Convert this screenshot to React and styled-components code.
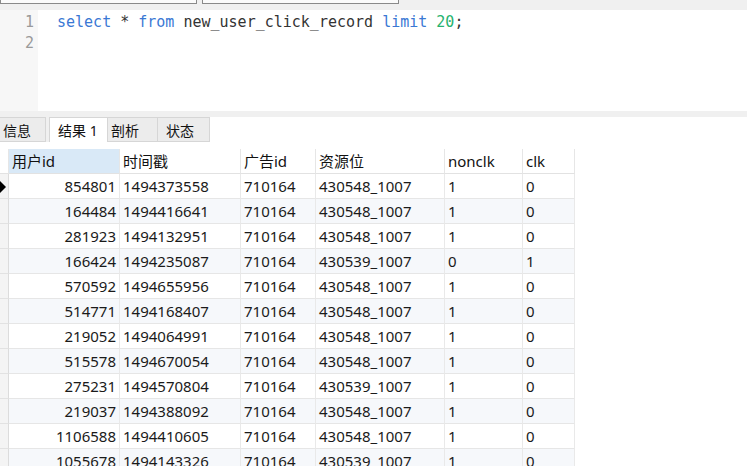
import { Fragment } from "react";
import styled, { createGlobalStyle } from "styled-components";

const GlobalStyle = createGlobalStyle`
  body {
    margin: 0;
    background: #fff;
    overflow: hidden;
  }
`;

const Page = styled.div`
  width: 747px;
  height: 466px;
  overflow: hidden;
  background: #fff;
  font-family: "Noto Sans", "Noto Sans CJK SC", sans-serif;
`;

const TopStrip = styled.div`
  height: 10px;
  background: #f0f0f0;
  display: flex;
  gap: 5px;
  align-items: flex-start;
`;

const InputStub = styled.div`
  width: 195px;
  height: 3px;
  background: #fbfbfb;
  border: 1px solid #8a8a8a;
  border-top: none;
`;

const Editor = styled.div`
  height: 101px;
  display: flex;
  background: #fff;
`;

const Gutter = styled.div`
  width: 38px;
  background: #f7f7f7;
  padding-top: 2px;
  box-sizing: border-box;
`;

const LineNo = styled.div`
  height: 21px;
  line-height: 21px;
  text-align: right;
  padding-right: 4px;
  font-family: "DejaVu Sans Mono", monospace;
  font-size: 15px;
  color: #9a9a9a;
`;

const Code = styled.div`
  padding: 2px 0 0 19px;
  font-family: "DejaVu Sans Mono", monospace;
  font-size: 15px;
  line-height: 21px;
  color: #333;
  white-space: pre;
`;

const Kw = styled.span`
  color: ${(p) => (p.$num ? "#27b36f" : "#3a78d4")};
`;

const Separator = styled.div`
  height: 6px;
  background: #f0f0f0;
`;

const TabBar = styled.div`
  height: 25px;
  display: flex;
  background: #fff;
`;

const Tab = styled.div`
  box-sizing: border-box;
  width: ${(p) => p.$w}px;
  height: 25px;
  padding-left: ${(p) => p.$pl ?? 8}px;
  line-height: 25px;
  font-size: 14px;
  color: #111;
  background: ${(p) => (p.$active ? "#fff" : "#ececec")};
  border: 1px solid #d6d6d6;
  border-bottom: ${(p) => (p.$active ? "none" : "1px solid #d6d6d6")};
  border-left: ${(p) => (p.$noLeft ? "none" : "1px solid #d6d6d6")};
`;

const TabGap = styled.div`
  width: ${(p) => p.$w}px;
  background: #f0f0f0;
`;

const Grid = styled.div`
  margin-top: 7px;
  display: grid;
  grid-template-columns: 9px 111px 121px 75px 129px 78px 52px;
  grid-auto-rows: 25px;
  width: 575px;
`;

const HeadCell = styled.div`
  box-sizing: border-box;
  padding-left: 3px;
  line-height: 24px;
  font-size: 15px;
  color: #111;
  background: ${(p) => (p.$sel ? "#d9e9f7" : "#fff")};
  border-right: 1px solid #e6e6e6;
  border-bottom: 1px solid #e2e2e2;
  white-space: nowrap;
`;

const Cell = styled.div`
  box-sizing: border-box;
  padding: 0 3px;
  line-height: 24px;
  font-size: 15px;
  color: #1a1a1a;
  text-align: ${(p) => (p.$right ? "right" : "left")};
  background: ${(p) => (p.$alt ? "#f6f8fb" : "#fff")};
  border-right: 1px solid #e9e9e9;
  border-bottom: 1px solid #e6e6e6;
  white-space: nowrap;
`;

const Marker = styled.div`
  position: relative;
  box-sizing: border-box;
  background: #f4f4f4;
  border-right: 1px solid #dcdcdc;
  border-bottom: 1px solid #e2e2e2;
`;

const Arrow = styled.div`
  position: absolute;
  left: 0;
  top: 7px;
  width: 0;
  height: 0;
  border-top: 6px solid transparent;
  border-bottom: 6px solid transparent;
  border-left: 6px solid #000;
`;

const rows = [
  ["854801", "1494373558", "710164", "430548_1007", "1", "0"],
  ["164484", "1494416641", "710164", "430548_1007", "1", "0"],
  ["281923", "1494132951", "710164", "430548_1007", "1", "0"],
  ["166424", "1494235087", "710164", "430539_1007", "0", "1"],
  ["570592", "1494655956", "710164", "430548_1007", "1", "0"],
  ["514771", "1494168407", "710164", "430548_1007", "1", "0"],
  ["219052", "1494064991", "710164", "430548_1007", "1", "0"],
  ["515578", "1494670054", "710164", "430548_1007", "1", "0"],
  ["275231", "1494570804", "710164", "430539_1007", "1", "0"],
  ["219037", "1494388092", "710164", "430548_1007", "1", "0"],
  ["1106588", "1494410605", "710164", "430548_1007", "1", "0"],
  ["1055678", "1494143326", "710164", "430539_1007", "1", "0"],
];

const headers = ["用户id", "时间戳", "广告id", "资源位", "nonclk", "clk"];

export default function App() {
  return (
    <Page>
      <GlobalStyle />
      <TopStrip>
        <InputStub />
        <InputStub />
      </TopStrip>
      <Editor>
        <Gutter>
          <LineNo>1</LineNo>
          <LineNo>2</LineNo>
        </Gutter>
        <Code>
          <Kw>select</Kw> * <Kw>from</Kw> new_user_click_record <Kw>limit</Kw>{" "}
          <Kw $num>20</Kw>;
        </Code>
      </Editor>
      <Separator />
      <TabBar>
        <Tab $w={46} $pl={3} $noLeft>信息</Tab>
        <TabGap $w={3} />
        <Tab $w={59} $active>结果 1</Tab>
        <Tab $w={50} $pl={3} $noLeft>剖析</Tab>
        <Tab $w={52} $noLeft>状态</Tab>
      </TabBar>
      <Grid>
        <HeadCell />
        {headers.map((h, i) => (
          <HeadCell key={h} $sel={i === 0}>
            {h}
          </HeadCell>
        ))}
        {rows.map((r, ri) => (
          <Fragment key={ri}>
            <Marker>{ri === 0 && <Arrow />}</Marker>
            {r.map((v, ci) => (
              <Cell key={ci} $right={ci === 0} $alt={ri % 2 === 1}>
                {v}
              </Cell>
            ))}
          </Fragment>
        ))}
      </Grid>
    </Page>
  );
}
